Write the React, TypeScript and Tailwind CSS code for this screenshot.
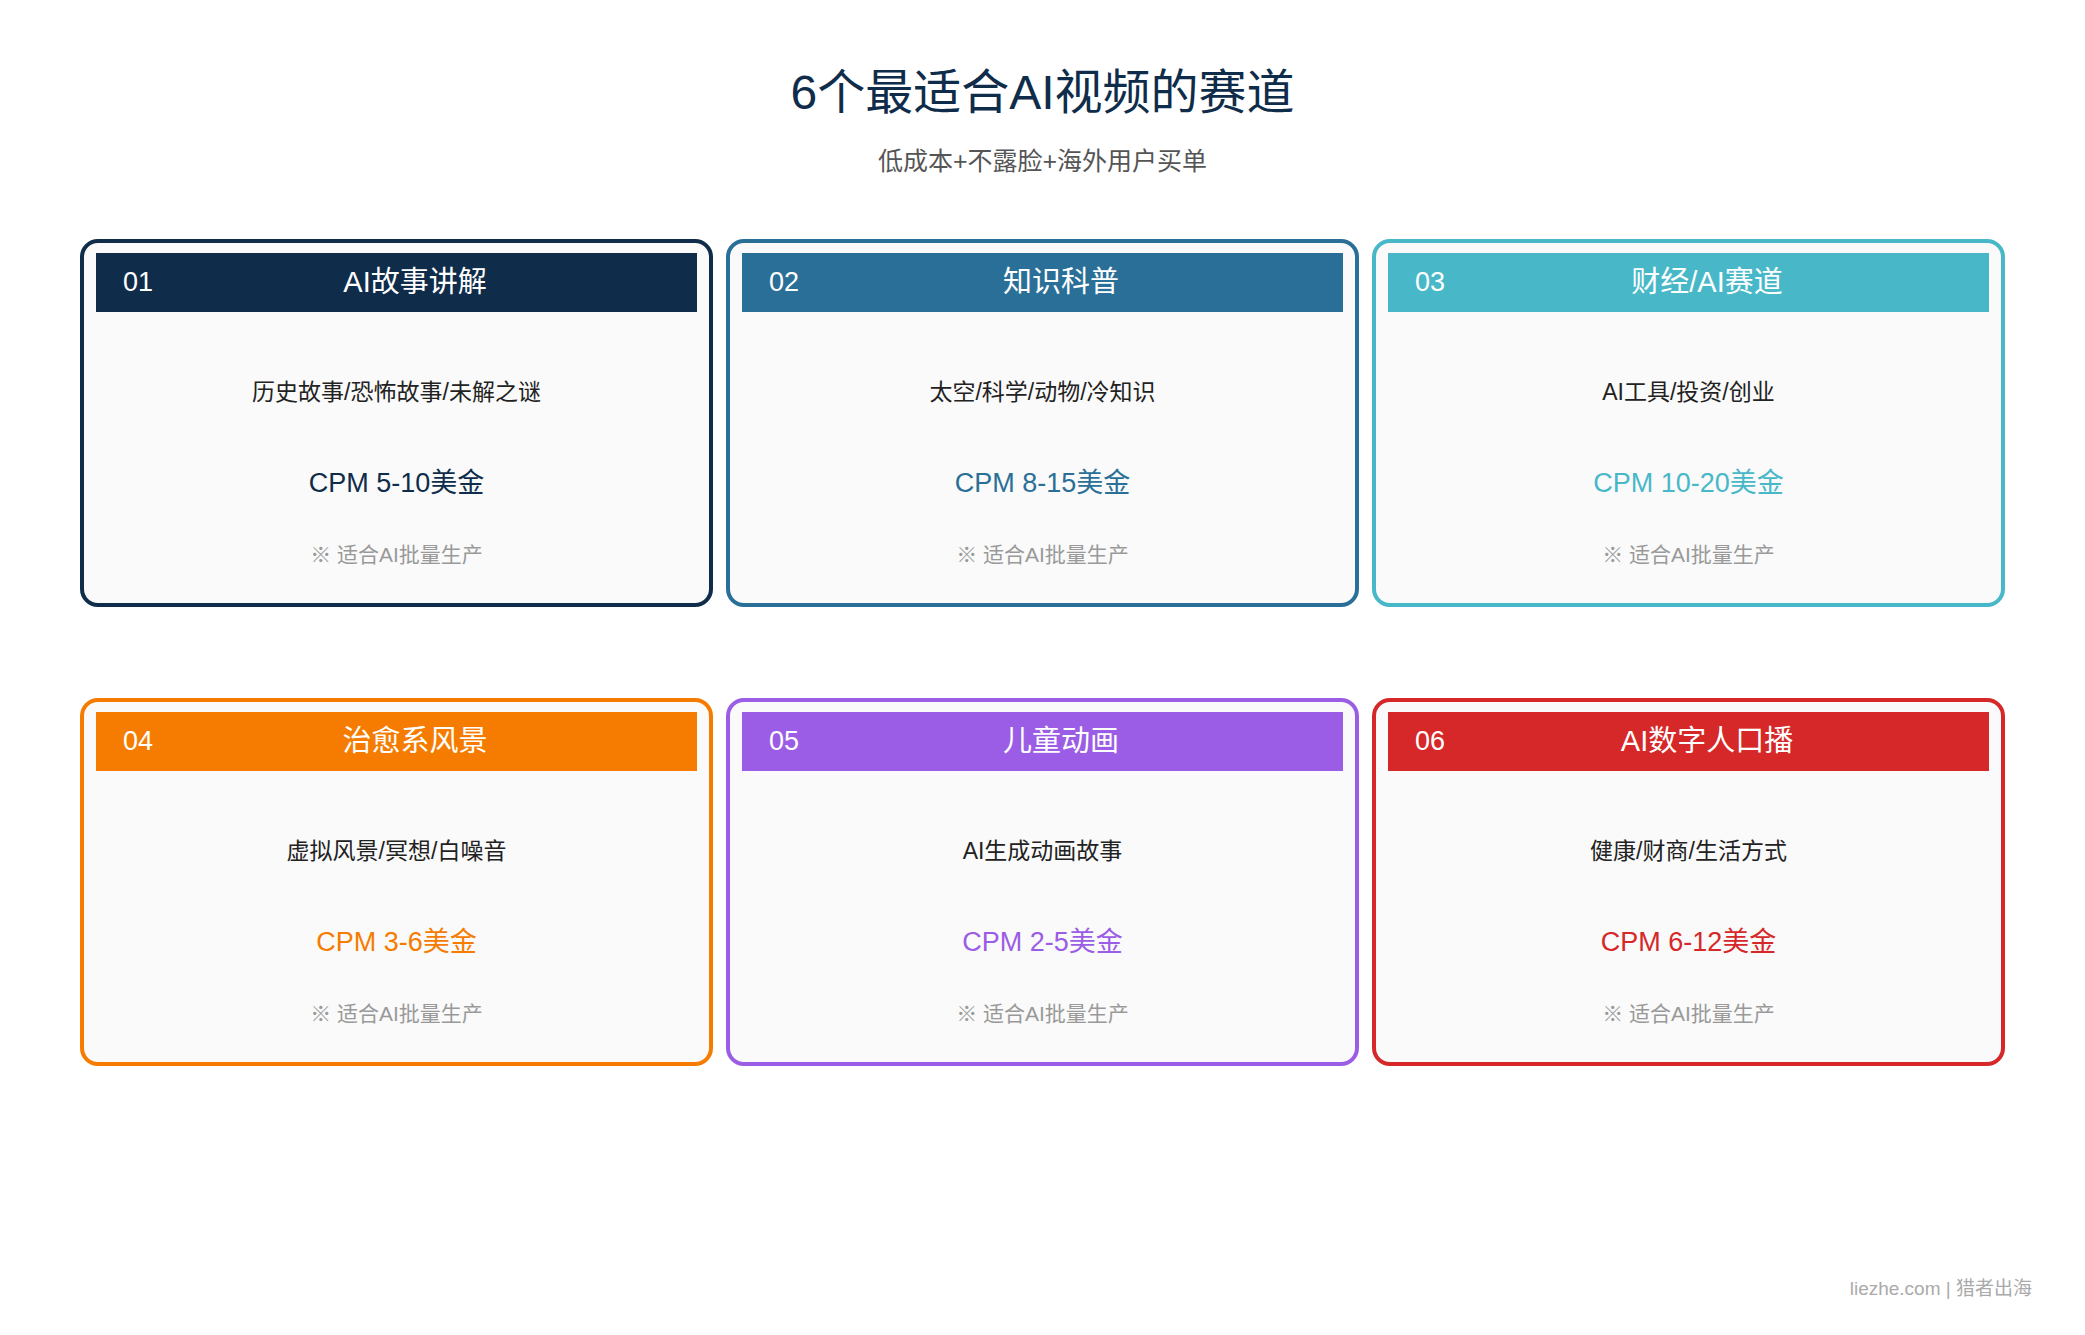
const cards = [
  { n: "01", title: "AI故事讲解", sub: "历史故事/恐怖故事/未解之谜", cpm: "CPM 5-10美金", color: "border-[#0f2d4a]", bg: "bg-[#0f2d4a]", text: "text-[#0f2d4a]" },
  { n: "02", title: "知识科普", sub: "太空/科学/动物/冷知识", cpm: "CPM 8-15美金", color: "border-[#2a6f97]", bg: "bg-[#2a6f97]", text: "text-[#2a6f97]" },
  { n: "03", title: "财经/AI赛道", sub: "AI工具/投资/创业", cpm: "CPM 10-20美金", color: "border-[#48b8c8]", bg: "bg-[#48b8c8]", text: "text-[#48b8c8]" },
  { n: "04", title: "治愈系风景", sub: "虚拟风景/冥想/白噪音", cpm: "CPM 3-6美金", color: "border-[#f57c00]", bg: "bg-[#f57c00]", text: "text-[#f57c00]" },
  { n: "05", title: "儿童动画", sub: "AI生成动画故事", cpm: "CPM 2-5美金", color: "border-[#9b5de5]", bg: "bg-[#9b5de5]", text: "text-[#9b5de5]" },
  { n: "06", title: "AI数字人口播", sub: "健康/财商/生活方式", cpm: "CPM 6-12美金", color: "border-[#d62828]", bg: "bg-[#d62828]", text: "text-[#d62828]" },
];

const font = { fontFamily: '"Liberation Sans", "Noto Sans CJK SC", sans-serif' };

function Card({ c }: { c: (typeof cards)[number] }) {
  return (
    <div className={`flex h-[368px] flex-col rounded-[18px] border-4 ${c.color} bg-[#fafafa] px-[12px] pt-[10px]`}>
      <div className={`flex h-[59px] items-center ${c.bg} pl-[27px] pr-[20px] text-white`}>
        <span className="text-[27px]">{c.n}</span>
        <span className="flex-1 text-center text-[29px]">{c.title}</span>
      </div>
      <div className="mt-[60px] flex h-[40px] items-center justify-center text-[23px] text-[#222]">{c.sub}</div>
      <div className={`mt-[51px] flex h-[40px] items-center justify-center text-[27px] ${c.text}`}>{c.cpm}</div>
      <div className="mt-[37px] flex h-[30px] items-center justify-center text-[21px] text-[#999]">※ 适合AI批量生产</div>
    </div>
  );
}

export default function App() {
  return (
    <div style={font} className="relative h-[1335px] w-[2085px] bg-white px-[80px] pt-[62px]">
      <h1 className="text-center text-[48px] leading-[62px] text-[#0f2d4a]">6个最适合AI视频的赛道</h1>
      <p className="mt-[21px] text-center text-[25px] leading-[32px] text-[#555]">低成本+不露脸+海外用户买单</p>
      <div className="mt-[62px] grid grid-cols-3 gap-x-[13px] gap-y-[91px]">
        {cards.map((c) => (
          <Card key={c.n} c={c} />
        ))}
      </div>
      <div className="absolute bottom-[32px] right-[53px] text-[19px] text-[#aaa]">liezhe.com | 猎者出海</div>
    </div>
  );
}
